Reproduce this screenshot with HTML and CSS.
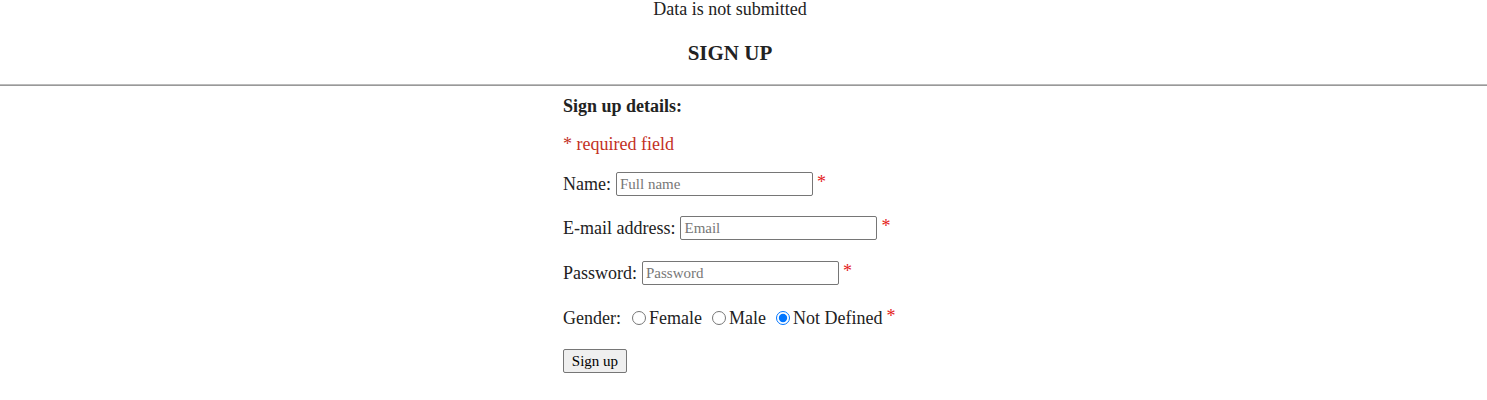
FILE: index.html
```html
<!DOCTYPE html>
<html>
<head>
<meta charset="utf-8">
<link rel="stylesheet" href="styles.css">
</head>
<body>
<p class="status">Data is not submitted</p>
<h2 class="title">SIGN UP</h2>
<hr class="rule">
<div class="wrap">
  <form class="signup">
    <h3 class="section">Sign up details:</h3>
    <p class="row req-note">* required field</p>
    <p class="row r-name">Name: <input class="field" type="text" placeholder="Full name"><span class="star">*</span></p>
    <p class="row r-mail">E-mail address: <input class="field" type="text" placeholder="Email"><span class="star">*</span></p>
    <p class="row r-pass">Password: <input class="field" type="password" placeholder="Password"><span class="star">*</span></p>
    <p class="row r-gender"><span class="glabel">Gender:</span>
      <label class="opt"><input type="radio" name="g">Female</label>
      <label class="opt"><input type="radio" name="g">Male</label>
      <label class="opt"><input type="radio" name="g" checked>Not Defined</label>
      <span class="star">*</span></p>
    <p class="row r-btn"><button type="button" class="btn">Sign up</button></p>
  </form>
</div>
</body>
</html>
```

FILE: styles.css
```css
html, body {
  margin: 0;
  padding: 0;
  background: #fff;
}
body {
  font-family: "Liberation Serif", "Times New Roman", serif;
  font-size: 18px;
  color: #222;
}
.status {
  margin: 0;
  padding-right: 27px;
  text-align: center;
  line-height: 18px;
}
.title {
  text-align: center;
  padding-right: 27px;
  font-size: 21px;
  margin: 24px 0 20px;
  line-height: 22px;
}
.rule {
  margin: 0;
  border: 0;
  border-top: 1px solid #bbb;
  border-bottom: 1px solid #999;
  height: 0;
}
.wrap {
  width: 361px;
  margin: 0 auto;
}
.signup {
  display: flex;
  flex-direction: column;
}
.section {
  font-size: 18px;
  margin: 10px 0 0;
  line-height: 20px;
}
.row {
  margin: 0;
  display: flex;
  align-items: center;
  white-space: nowrap;
  height: 24px;
}
.req-note {
  color: #c3311f;
  margin-top: 16px;
}
.r-name { margin-top: 16px; }
.r-mail { margin-top: 20px; }
.r-pass { margin-top: 21px; }
.r-gender { margin-top: 21px; }
.r-btn { margin-top: 19px; }
.field {
  font-family: "Liberation Serif", serif;
  font-size: 15px;
  width: 197px;
  height: 24px;
  box-sizing: border-box;
  border: 1px solid #767676;
  border-radius: 2px;
  padding: 1px 3px;
  margin: 0 0 0 5px;
  color: #222;
}
.field::placeholder {
  color: #777;
}
.star {
  color: #e41b1b;
  margin-left: 4px;
  position: relative;
  top: -2px;
}
.glabel {
  margin-right: 11px;
}
.opt {
  display: inline-flex;
  align-items: center;
  margin-right: 10px;
}
.opt input {
  width: 14px;
  height: 14px;
  margin: 0 3px 0 0;
}
.opt:last-of-type {
  margin-right: 0;
}
.btn {
  font-family: "Liberation Serif", serif;
  font-size: 15px;
  height: 24px;
  width: 64px;
  padding: 0 6px;
  border: 1px solid #767676;
  border-radius: 2px;
  background: #efefef;
  color: #000;
}
```
